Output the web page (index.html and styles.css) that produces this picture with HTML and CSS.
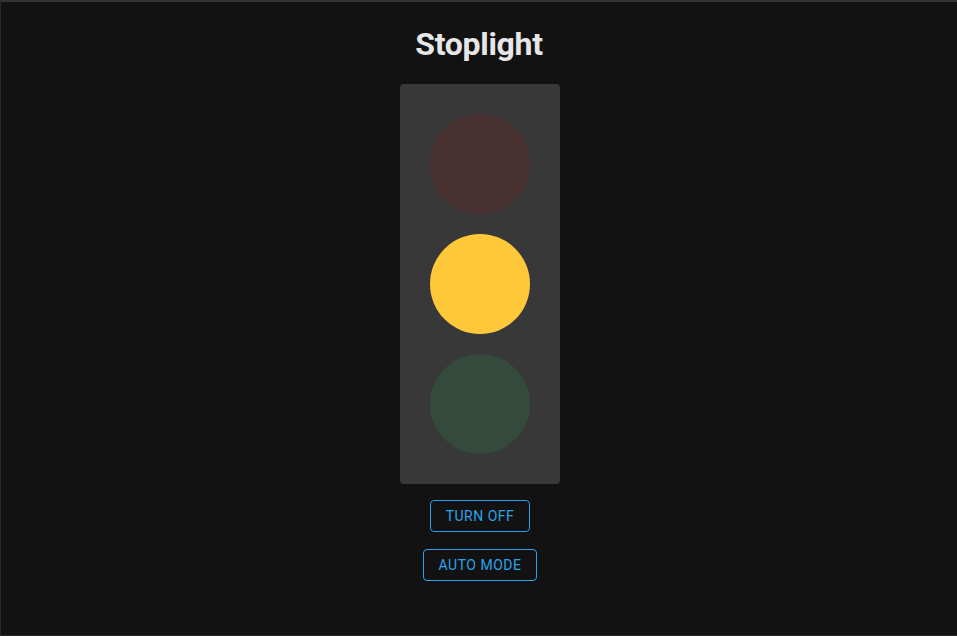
FILE: index.html
```html
<!DOCTYPE html>
<html lang="en">
<head>
<meta charset="utf-8">
<title>Stoplight</title>
<link rel="stylesheet" href="styles.css">
</head>
<body>
<div class="frame">
  <main class="app">
    <h1 class="title">Stoplight</h1>
    <div class="housing">
      <div class="light light-red"></div>
      <div class="light light-yellow"></div>
      <div class="light light-green"></div>
    </div>
    <div class="controls">
      <button class="btn" type="button">TURN OFF</button>
      <button class="btn" type="button">AUTO MODE</button>
    </div>
  </main>
</div>
</body>
</html>
```
FILE: styles.css
```css
html, body {
  margin: 0;
  padding: 0;
  height: 100%;
  background: #121212;
}
.frame {
  box-sizing: border-box;
  height: 636px;
  border-top: 2px solid #333333;
  border-left: 1px solid #2a2a2a;
  border-bottom: 1px solid #2a2a2a;
  background: #121212;
}
.app {
  display: flex;
  flex-direction: column;
  align-items: center;
  padding-top: 22px;
  padding-left: 2px;
  font-family: Roboto, "Liberation Sans", sans-serif;
}
.title {
  margin: 0 0 0 -2px;
  font-size: 32px;
  line-height: 40px;
  font-weight: 700;
  color: #e6e6e6;
  letter-spacing: -0.3px;
}
.housing {
  margin-top: 20px;
  width: 160px;
  box-sizing: border-box;
  padding: 30px;
  display: flex;
  flex-direction: column;
  gap: 20px;
  background: #383838;
  border-radius: 4px;
}
.light {
  width: 100px;
  height: 100px;
  border-radius: 50%;
}
.light-red { background: #4a3232; }
.light-yellow { background: #ffc83a; }
.light-green { background: #344a3d; }
.controls {
  margin-top: 16px;
  display: flex;
  flex-direction: column;
  align-items: center;
  gap: 17px;
}
.btn {
  font-family: Roboto, "Liberation Sans", sans-serif;
  font-size: 14px;
  font-weight: 400;
  line-height: 20px;
  letter-spacing: 0.5px;
  color: #2ba2ea;
  background: transparent;
  border: 1px solid #2ba2ea;
  border-radius: 4px;
  padding: 5px 15px;
  cursor: pointer;
}
```
